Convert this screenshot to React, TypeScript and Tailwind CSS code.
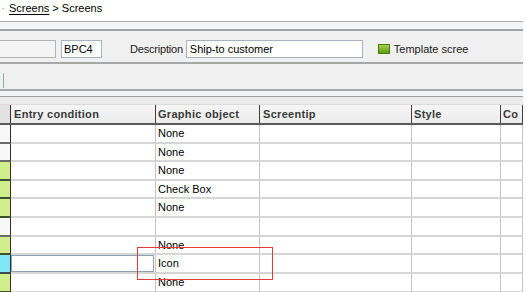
import React from 'react';

type Row = { h: number; obj: string; ind: 'white' | 'green' | 'cyan'; focus?: boolean };

const rows: Row[] = [
  { h: 19, obj: 'None', ind: 'white' },
  { h: 18, obj: 'None', ind: 'white' },
  { h: 19, obj: 'None', ind: 'green' },
  { h: 18, obj: 'Check Box', ind: 'green' },
  { h: 19, obj: 'None', ind: 'green' },
  { h: 19, obj: '', ind: 'white' },
  { h: 18, obj: 'None', ind: 'green' },
  { h: 19, obj: 'Icon', ind: 'cyan', focus: true },
  { h: 19, obj: 'None', ind: 'green' },
];

const indColor = {
  white: 'bg-[#f8f8f8] border-[#6a6a6a]',
  green: 'bg-[#d0ee8a] border-[#3e5030]',
  cyan: 'bg-[#7fe6f6] border-[#3a4a50]',
};

const headers = [
  { label: 'Entry condition', w: 'w-[145px]', pl: 'pl-[3px]' },
  { label: 'Graphic object', w: 'w-[104px]', pl: 'pl-[2px]' },
  { label: 'Screentip', w: 'w-[152px]', pl: 'pl-[3px]' },
  { label: 'Style', w: 'w-[89px]', pl: 'pl-[2px]' },
  { label: 'Co', w: 'w-[22px]', pl: 'pl-[2px]' },
];

const App: React.FC = () => {
  return (
    <div className="relative w-[526px] h-[292px] overflow-hidden bg-white text-[11px] text-black font-['Liberation_Sans',Arial,sans-serif] leading-none">
      {/* Breadcrumb */}
      <div className="h-[21px] flex items-center pb-[5px]">
        <span className="w-[9px] pl-[1px] text-[#9a9a9a]">·</span>
        <span className="underline underline-offset-2">Screens</span>
        <span className="ml-[3px]">&gt; Screens</span>
      </div>

      {/* Panels */}
      <div className="-ml-[8px] w-[531px]">
        <div className="h-[10px] bg-[#f3f4f5] border-t border-b-2 border-[#b0b0b0] border-b-[#a2a2a2] rounded-l-[6px]" />
        <div className="h-[33px] bg-[#f0f0f0] border-b-2 border-[#a8a8a8] rounded-bl-[6px] flex items-start pt-[9px]">
          <div className="w-[64px] h-[18px] bg-[#f4f4f4] border border-[#b4b4b4]" />
          <div className="ml-[5px] w-[41px] h-[18px] bg-white border border-[#a6b4c2] flex items-center pl-[2px]">BPC4</div>
          <span className="ml-[28px] mt-[4px] text-[#202020] tracking-[-0.2px]">Description</span>
          <div className="ml-[3px] w-[177px] h-[18px] bg-white border border-[#a6b4c2] flex items-center pl-[3px]">Ship-to customer</div>
          <div className="ml-[15px] mt-[4px] w-[12px] h-[10px] border border-[#4a7a10] bg-gradient-to-b from-[#a6d84a] to-[#5e9a14]" />
          <span className="ml-[4px] mt-[4px] text-[#202020]">Template scree</span>
        </div>
        <div className="h-[27px] bg-[#f0f0f0] border-b-2 border-[#a8a8a8] rounded-bl-[6px] pl-[11px] pt-[9px]">
          <div className="w-[1px] h-[15px] bg-[#8fb0a4]" />
        </div>
        <div className="h-[6px] bg-[#f3f4f5] border-b border-[#a0a0a0] rounded-bl-[6px]" />
      </div>

      {/* Table */}
      <div className="w-[523px] bg-[#ececec] pt-[7px]">
        <div className="flex h-[21px] bg-gradient-to-b from-[#f6f6f6] to-[#ebebeb] border-t border-[#dcdcdc] border-b-2 border-b-[#5a5a5a]">
          <div className="w-[11px] border-r border-[#303030] bg-[#e2e2e2]" />
          {headers.map(h => (
            <div
              key={h.label}
              className={`${h.w} ${h.pl} border-r border-[#404040] flex items-center font-bold text-[#3a3a3a] tracking-[0.3px] overflow-hidden whitespace-nowrap`}
            >
              {h.label}
            </div>
          ))}
        </div>
        {rows.map((r, i) => (
          <div key={i} className="flex bg-white" style={{ height: r.h }}>
            <div className={`w-[11px] border-r border-r-[#303030] border-b-2 ${indColor[r.ind]}`} />
            <div className="w-[145px] border-r border-b-2 border-[#d6d6d6] border-r-[#c4c4c4] flex">
              {r.focus && <div className="w-[143px] h-full border border-[#8da3b6]" />}
            </div>
            <div className="w-[104px] border-r border-b-2 border-[#d6d6d6] border-r-[#c4c4c4] flex items-center pl-[2px] whitespace-nowrap">
              {r.obj}
            </div>
            <div className="w-[152px] border-r border-b-2 border-[#d6d6d6] border-r-[#c4c4c4]" />
            <div className="w-[89px] border-r border-b-2 border-[#d6d6d6] border-r-[#c4c4c4]" />
            <div className="w-[22px] border-r border-b-2 border-[#d6d6d6] border-r-[#c4c4c4]" />
          </div>
        ))}
      </div>

      {/* Annotation */}
      <div className="absolute left-[137px] top-[247px] w-[136px] h-[33px] border-[1.5px] border-[#e23b3b]" />
    </div>
  );
};

export default App;
